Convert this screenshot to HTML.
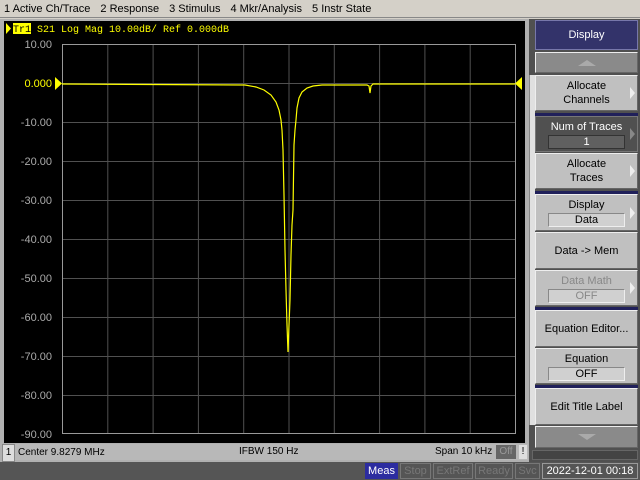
<!DOCTYPE html>
<html><head><style>
*{margin:0;padding:0;box-sizing:border-box}
body{width:640px;height:480px;background:#d4d0c8;position:relative;overflow:hidden;font-family:"Liberation Sans",sans-serif;font-size:11px}
.menu{position:absolute;left:0;top:0;width:640px;height:18px;background:#d4d0c8;border-bottom:1px solid #888;color:#000;font-size:11px;line-height:18px}
.menu span{margin-left:4px;margin-right:6px}
.frame{position:absolute;left:0;top:19px;width:530px;height:443px;background:#b0b0b0}
.chart{position:absolute;left:4px;top:21px;width:521px;height:422px;background:#000}
.foot{position:absolute;left:2px;top:444px;width:526px;height:16px;background:#b8b8b8;font-size:10px;line-height:16px;color:#000}
.panel{position:absolute;left:529px;top:19px;width:111px;height:443px;background:#505050}
.strip{position:absolute;left:529px;top:75px;width:6px;height:350px;background:#e0e0e0;border-left:1px solid #888}
.btn{position:absolute;left:535px;width:103px;background:#c0c0c0;border:1px solid #eee;border-right-color:#666;border-bottom-color:#666;text-align:center;font-size:11px;color:#000;display:flex;flex-direction:column;justify-content:center;align-items:center;line-height:14px}
.val{width:77px;height:14px;background:#d0d0d0;border:1px solid #888;border-right-color:#eee;border-bottom-color:#eee;line-height:12px;margin-top:1px}
.arr{position:absolute;right:2px;top:50%;margin-top:-6px;width:0;height:0;border-left:5px solid #eee;border-top:6px solid transparent;border-bottom:6px solid transparent}
.sep{position:absolute;left:535px;width:103px;height:3px;background:#20205a}
.status{position:absolute;left:0;top:462px;width:640px;height:18px;background:#555;font-size:11px}
.st{position:absolute;top:1px;height:16px;line-height:15px;border:1px solid #777;color:#777;text-align:center;white-space:nowrap;overflow:hidden}
</style></head><body>
<div class="menu"><span>1 Active Ch/Trace</span><span>2 Response</span><span>3 Stimulus</span><span>4 Mkr/Analysis</span><span>5 Instr State</span></div>
<div class="frame"></div>
<div class="chart"></div>
<svg style="position:absolute;left:0;top:0" width="530" height="444" font-family="Liberation Sans,sans-serif" font-size="11">
<g stroke="#505050" stroke-width="1">
<line x1="107.8" y1="44" x2="107.8" y2="434"/><line x1="153.1" y1="44" x2="153.1" y2="434"/><line x1="198.4" y1="44" x2="198.4" y2="434"/><line x1="243.7" y1="44" x2="243.7" y2="434"/><line x1="289" y1="44" x2="289" y2="434"/><line x1="334.3" y1="44" x2="334.3" y2="434"/><line x1="379.6" y1="44" x2="379.6" y2="434"/><line x1="424.9" y1="44" x2="424.9" y2="434"/><line x1="470.2" y1="44" x2="470.2" y2="434"/>
<line x1="62" y1="83.5" x2="515" y2="83.5"/><line x1="62" y1="122.5" x2="515" y2="122.5"/><line x1="62" y1="161.5" x2="515" y2="161.5"/><line x1="62" y1="200.5" x2="515" y2="200.5"/><line x1="62" y1="239.5" x2="515" y2="239.5"/><line x1="62" y1="278.5" x2="515" y2="278.5"/><line x1="62" y1="317.5" x2="515" y2="317.5"/><line x1="62" y1="356.5" x2="515" y2="356.5"/><line x1="62" y1="395.5" x2="515" y2="395.5"/>
</g>
<rect x="62.5" y="44.5" width="453" height="389" fill="none" stroke="#999"/>
<rect x="13" y="23" width="18" height="11" fill="#ff0"/>
<polygon points="6,23 11,28.5 6,34" fill="#ff0"/>
<text x="13" y="32" fill="#000" font-family="Liberation Mono,monospace" font-size="10">Tr1</text>
<text x="37" y="32" fill="#ff0" font-family="Liberation Mono,monospace" font-size="10">S21 Log Mag 10.00dB/ Ref 0.000dB</text>
<g fill="#aaa" text-anchor="end"><text x="52" y="48">10.00</text><text x="52" y="126">-10.00</text><text x="52" y="165">-20.00</text><text x="52" y="204">-30.00</text><text x="52" y="243">-40.00</text><text x="52" y="282">-50.00</text><text x="52" y="321">-60.00</text><text x="52" y="360">-70.00</text><text x="52" y="399">-80.00</text><text x="52" y="438">-90.00</text></g>
<text x="52" y="87" fill="#ff0" text-anchor="end">0.000</text>
<polygon points="55,77 62,83.5 55,90" fill="#ff0"/>
<polygon points="522,77 515,83.5 522,90" fill="#ff0"/>
<polyline fill="none" stroke="#ff0" stroke-width="1.2" points="62,84 245,85 256,87 264,90 271,95 276,102 279,110 281,120 282,130 283,150 284,195 285,250 286,290 287,325 288,352 289,325 290,300 291,255 292,225 293,210 294,145 295,130 296,120 297,108 299,98 302,92 307,88 313,86 322,85 367,85 369,86 370,93 371,86 373,84 515,84"/>
</svg>
<div class="foot"><span style="display:inline-block;width:13px;text-align:center;background:#ddd;border:1px solid #888;margin-right:3px">1</span>Center 9.8279 MHz<span style="position:absolute;left:237px">IFBW 150 Hz</span><span style="position:absolute;left:433px">Span 10 kHz</span><span style="position:absolute;left:494px;top:1px;height:14px;line-height:14px;width:20px;background:#666;color:#999;text-align:center">Off</span><span style="position:absolute;left:517px;top:1px;height:14px;line-height:14px;width:8px;background:#ddd;text-align:center">!</span></div>
<div class="panel"></div>
<div class="strip"></div>
<div class="btn" style="top:20px;height:30px;background:#33336a;color:#fff;border-color:#7777aa">Display</div>
<div class="btn" style="top:52px;height:21px;background:#8a8a8a"><div style="width:0;height:0;border-left:9px solid transparent;border-right:9px solid transparent;border-bottom:6px solid #aaa"></div></div>
<div class="btn" style="top:75px;height:36px">Allocate<br>Channels<div class="arr"></div></div>
<div class="sep" style="top:113px"></div>
<div class="btn" style="top:116px;height:36px;background:#505050;color:#fff;border-color:#777"><div>Num of Traces</div><div class="val" style="background:#606060;color:#fff;border-color:#333">1</div><div class="arr" style="border-left-color:#888"></div></div>
<div class="btn" style="top:153px;height:36px">Allocate<br>Traces<div class="arr"></div></div>
<div class="sep" style="top:191px"></div>
<div class="btn" style="top:194px;height:37px"><div>Display</div><div class="val">Data</div><div class="arr"></div></div>
<div class="btn" style="top:232px;height:37px">Data -&gt; Mem</div>
<div class="btn" style="top:270px;height:36px;color:#888"><div>Data Math</div><div class="val" style="color:#888">OFF</div><div class="arr"></div></div>
<div class="sep" style="top:307px"></div>
<div class="btn" style="top:310px;height:37px">Equation Editor...</div>
<div class="btn" style="top:348px;height:36px"><div>Equation</div><div class="val">OFF</div></div>
<div class="sep" style="top:385px"></div>
<div class="btn" style="top:388px;height:37px">Edit Title Label</div>
<div class="btn" style="top:426px;height:22px;background:#8a8a8a"><div style="width:0;height:0;border-left:9px solid transparent;border-right:9px solid transparent;border-top:6px solid #aaa"></div></div>
<div style="position:absolute;left:532px;top:450px;width:106px;height:10px;background:#444;border:1px solid #666"></div>
<div class="status">
<div class="st" style="left:365px;width:33px;background:#2c2ca0;color:#fff;border-color:#2c2ca0">Meas</div>
<div class="st" style="left:400px;width:31px">Stop</div>
<div class="st" style="left:433px;width:40px">ExtRef</div>
<div class="st" style="left:475px;width:38px">Ready</div>
<div class="st" style="left:515px;width:25px">Svc</div>
<div class="st" style="left:542px;width:96px;color:#fff;border-color:#999">2022-12-01 00:18</div>
</div>
</body></html>
